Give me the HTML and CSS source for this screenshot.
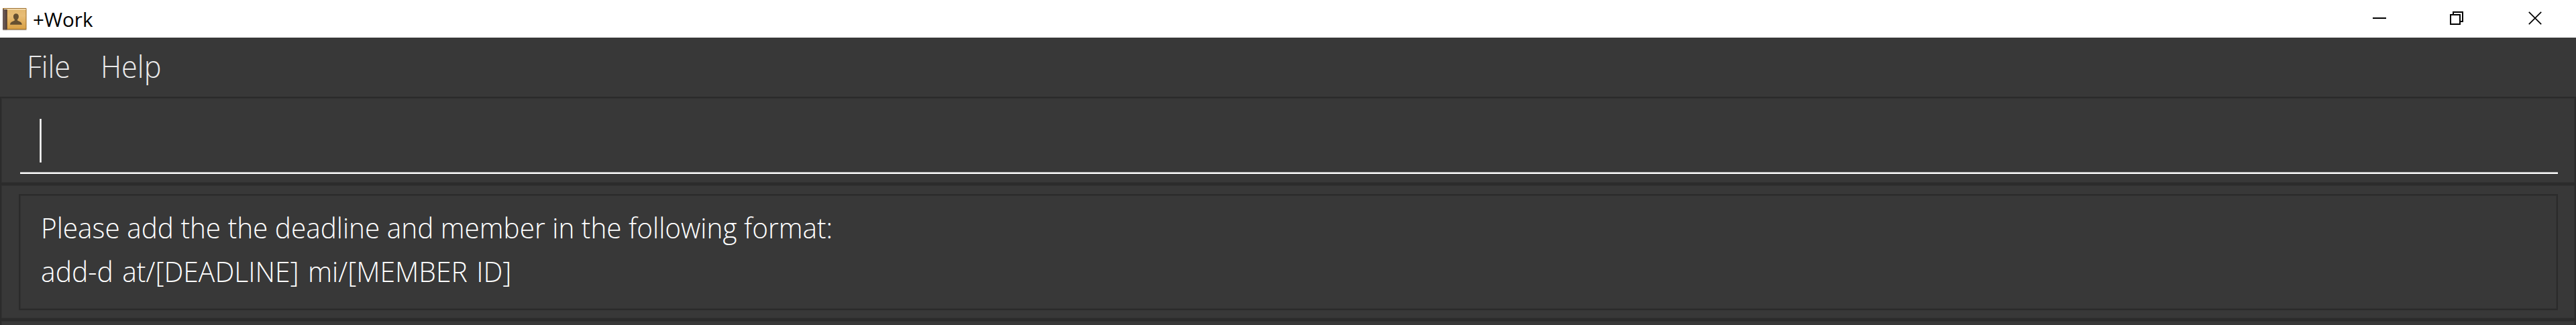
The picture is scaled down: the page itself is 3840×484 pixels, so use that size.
FILE: index.html
```html
<!DOCTYPE html>
<html lang="en">
<head>
<meta charset="utf-8">
<title>+Work</title>
<link rel="stylesheet" href="styles.css">
</head>
<body>
<div class="window">
  <header class="titlebar">
    <svg class="app-icon" viewBox="0 0 38 36" width="38" height="36">
      <defs>
        <linearGradient id="cover" x1="0" y1="0" x2="0" y2="1"><stop offset="0" stop-color="#e2b66c"/><stop offset="0.35" stop-color="#e8bd76"/><stop offset="1" stop-color="#d9a146"/></linearGradient>
        <linearGradient id="spine" x1="0" y1="0" x2="1" y2="0"><stop offset="0" stop-color="#6b5a55"/><stop offset="0.5" stop-color="#65534e"/><stop offset="1" stop-color="#4b3a38"/></linearGradient>
      </defs>
      <rect x="1" y="32.5" width="36" height="2" rx="1" fill="#ddd"/>
      <rect x="1" y="1" width="35.5" height="32.3" rx="1" fill="#9a6a25"/>
      <rect x="8" y="2" width="27.5" height="30" fill="url(#cover)"/>
      <rect x="3" y="2" width="32.5" height="1.4" fill="#f7e6c5"/>
      <rect x="1" y="3" width="6.5" height="30.3" fill="url(#spine)"/>
      <path d="M20.900 9.200c2.500 0 4 1.700 4 4.300 0 2-.8 3.600-1.900 4.500v1.600c1 .9 6.800 1.600 6.800 6.200H12c0-4.600 5.800-5.300 6.800-6.200V18c-1.100-.9-1.900-2.500-1.900-4.500 0-2.600 1.500-4.300 4-4.300z" fill="#665031"/>
    </svg>
    <span class="title">+Work</span>
    <div class="controls">
      <svg class="control minimize" viewBox="0 0 20 20" width="20" height="20"><path d="M0 10h20" stroke="#000" stroke-width="2"/></svg>
      <svg class="control restore" viewBox="0 0 20 20" width="20" height="20"><path d="M1 5h14v14H1zM5 5V1h14v14h-4" fill="none" stroke="#000" stroke-width="2"/></svg>
      <svg class="control" viewBox="0 0 20 20" width="20" height="20"><path d="M.8.800 19.200 19.200M19.200.800.800 19.200" stroke="#000" stroke-width="1.700"/></svg>
    </div>
  </header>
  <nav class="menu">
    <span class="menu-item">File</span>
    <span class="menu-item">Help</span>
  </nav>
  <section class="panel command">
    <div class="field"><span class="caret"></span></div>
  </section>
  <section class="panel result">
    <div class="message">
      <p class="line prompt">Please add the the deadline and member in the following format:</p>
      <p class="line usage">add-d at/[DEADLINE] mi/[MEMBER ID]</p>
    </div>
  </section>
  <section class="panel rest"></section>
</div>
</body>
</html>
```
FILE: styles.css
```css
* { box-sizing: border-box; }
body { margin: 0; background: #383838; }
.window {
  width: 3840px; height: 484px; overflow: hidden;
  display: flex; flex-direction: column;
  background: #383838;
  font-family: "Open Sans", "Noto Sans", sans-serif;
}
.titlebar {
  height: 56px; flex: none; display: flex; align-items: flex-start;
  padding: 11px 51px 0 3px; background: #fff; color: #000;
}
.app-icon { flex: none; }
.title { margin: -2px 0 0 8px; font-size: 29.500px; line-height: 40px; white-space: nowrap; }
.controls { display: flex; margin: 6px 0 0 auto; }
.control { display: block; }
.minimize { margin-right: 95px; }
.restore { margin-right: 97px; }
.menu {
  height: 88px; flex: none; display: flex; align-items: flex-start;
  padding: 10px 0 0 40px; color: #ebebeb; font-size: 46px; font-weight: 300; line-height: 64px;
}
.menu-item { width: 110px; transform: scaleX(.94); transform-origin: 0 0; }
.panel {
  flex: none; border: 2px solid #2b2b2b; box-shadow: inset 0 0 0 1px #323232;
}
.command { height: 130px; padding: 31px 25px 13px 28px; }
.field {
  height: 82px; border-bottom: 2px solid #fff; padding-left: 29px;
  box-shadow: inset 0 -1px 0 #9b9b9b;
}
.caret { display: block; width: 3px; height: 65px; background: #fff; border: solid #d0d0d0; border-width: 0 1px; }
.result { height: 202px; padding: 13px 25px 0 26px; }
.message {
  height: 173px; border: 2px solid #2b2b2b; box-shadow: inset 0 0 0 1px #323232;
  padding: 15px 0 0 31px;
}
.line {
  margin: 0; color: #fff; font-size: 43px; font-weight: 300; line-height: 65px;
  white-space: pre; width: max-content; transform-origin: 0 0;
}
.prompt { transform: scaleX(.942); }
.usage { word-spacing: 3px; transform: scaleX(.95); }
.rest { height: 20px; }
```
